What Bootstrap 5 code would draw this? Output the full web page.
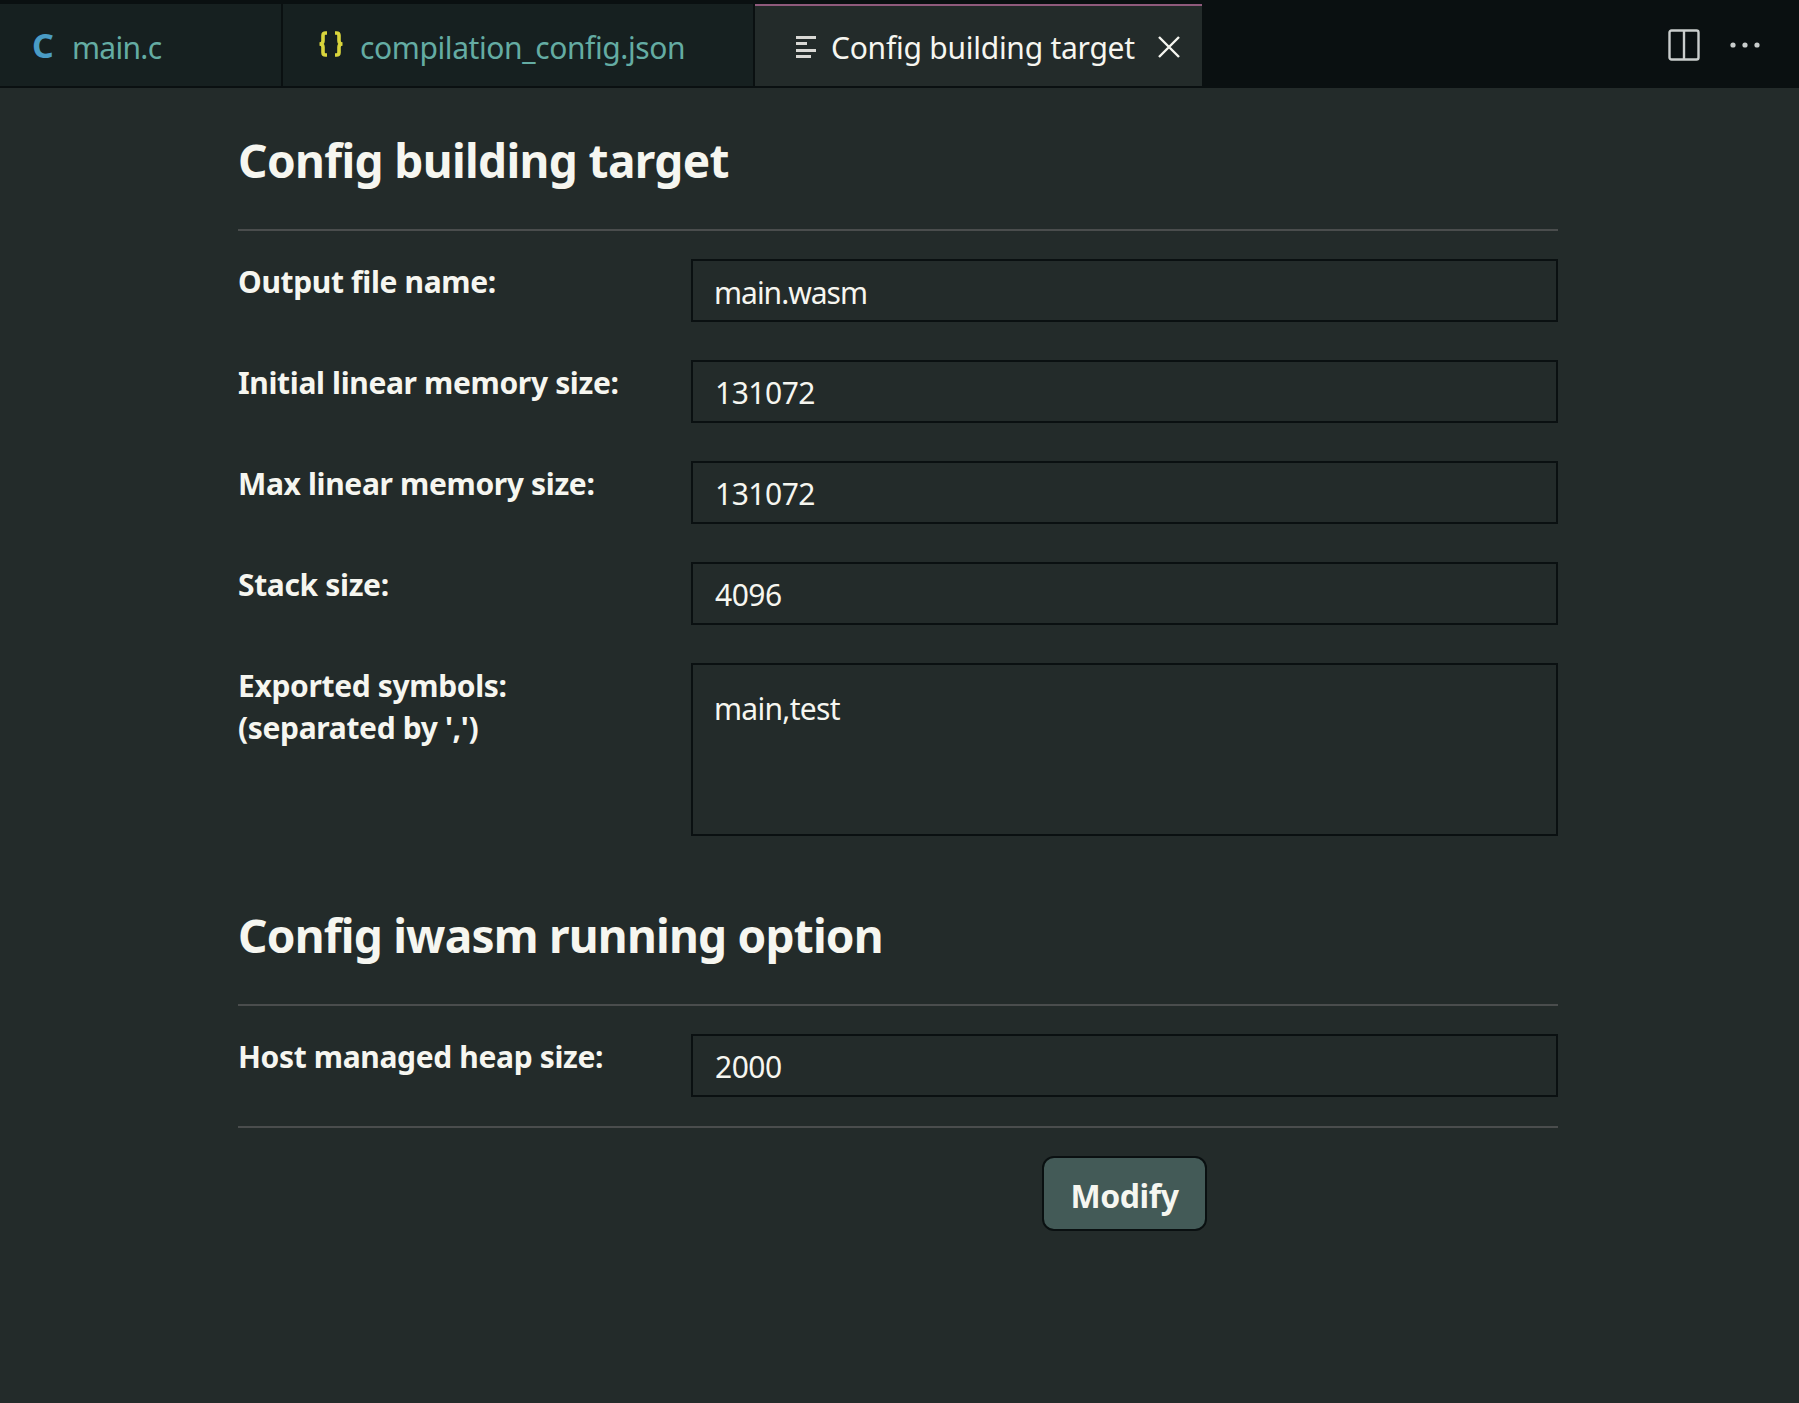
<!DOCTYPE html>
<html lang="en">
<head>
<meta charset="utf-8">
<title>Config building target</title>
<link rel="stylesheet" href="https://cdn.jsdelivr.net/npm/bootstrap@5.3.0/dist/css/bootstrap.min.css">
<style>
html,body{height:100%}
body{background:#232b2a;color:#f6f6f0;font-family:"Noto Sans","Open Sans",sans-serif;overflow:hidden}
.tabbar{height:88px;background:#0a1011;padding-top:4px;border-bottom:2px solid #0a1011}
.tabitem{height:82px;background:#162020;color:#64aca3;font-size:30px;letter-spacing:-.7px;border-right:2px solid #0a1011;flex:none;padding-top:4px}
.tabitem.one{width:283px;padding-left:32px}
.tabitem.two{width:472px;padding-left:35px;letter-spacing:-.4px}
.tabitem.three{width:447px;padding-left:40px;padding-top:2px;background:#232b2a;color:#f6f6f0;border-right:0;border-top:2px solid #8f5a7c;height:82px;letter-spacing:-.25px}
.cglyph{color:#4a9cc5;font-weight:700;font-size:34px;width:40px;line-height:1;margin-top:-4px}
.braceic{margin-right:16px;margin-top:-6px;flex:none}
.tabname{margin-left:-2px}
.formwrap{width:1320px;margin-left:238px}
.headline{font-size:46px;font-weight:700;line-height:60px;letter-spacing:-.65px;margin:0;padding-top:42px;height:141px}
.headline.second{padding-top:69px;height:168px;letter-spacing:-.8px}
.rule{border:0;border-top:2px solid #4a4d4d;opacity:1;margin:0}
.rule.gapped{margin-top:29px}
.rowline{display:flex;margin-top:38px;height:63px}
.rowline.first{margin-top:28px}
.rowline.tall{height:173px}
.lbl{width:453px;font-size:30px;font-weight:700;line-height:42px;letter-spacing:-.35px;margin:0;flex:none;padding-top:2px}
.fieldbox{flex:1;height:100%;background:#232b2a;border:2px solid #0a1011;border-radius:0;color:#f6f6f0;font-size:30px;letter-spacing:-.5px;padding:2px 22px 0;font-family:inherit;resize:none;display:block;width:100%}
.fieldbox:focus{background:#232b2a;color:#f6f6f0;border-color:#0a1011;box-shadow:none}
.fieldbox.wordy{letter-spacing:-1px;padding-left:21px;padding-top:4px}
textarea.fieldbox{padding-top:23px;padding-left:21px;line-height:42px;letter-spacing:-.7px}
.btnline{display:flex;margin-top:28px}
.btnspace{width:453px;flex:none}
.btncell{flex:1;display:flex;justify-content:center}
.modbtn{width:165px;height:75px;background:#435a57;color:#f6f6f0;border:2px solid #0a1011;border-radius:12px;font-size:32px;font-weight:700;letter-spacing:-.4px;padding:4px 0 0}
.modbtn:hover{background:#435a57;color:#f6f6f0;border-color:#0a1011}
.closeic{margin-right:22px}
.splitic{margin-right:30px}
.dotsic{margin-right:39px}
</style>
</head>
<body>
<nav class="tabbar d-flex align-items-start">
  <div class="tabitem one d-flex align-items-center"><span class="cglyph">C</span><span>main.c</span></div>
  <div class="tabitem two d-flex align-items-center">
    <svg class="braceic" width="26" height="26" viewBox="0 0 26 26"><path d="M9 2H7.5Q5 2 5 4.5V10Q5 13 1.5 13Q5 13 5 16V21.5Q5 24 7.5 24H9M17 2H18.500Q21 2 21 4.500V10Q21 13 24.500 13Q21 13 21 16V21.500Q21 24 18.500 24H17" fill="none" stroke="#d9d53c" stroke-width="3.6"/></svg>
    <span>compilation_config.json</span></div>
  <div class="tabitem three d-flex align-items-center">
    <svg width="22" height="22" viewBox="0 0 22 22" class="me-3"><g fill="#d8d8d4"><rect x="1" y="0" width="20" height="3"/><rect x="1" y="6" width="11" height="3"/><rect x="1" y="13" width="20" height="3"/><rect x="1" y="19" width="15" height="3"/></g></svg>
    <span class="tabname">Config building target</span>
    <svg width="22" height="22" viewBox="0 0 22 22" class="ms-auto closeic"><path d="M1 1 21 21M21 1 1 21" stroke="#f6f6f0" stroke-width="2.4" fill="none"/></svg>
  </div>
  <div class="ms-auto d-flex align-items-center" style="height:82px">
    <svg width="32" height="32" viewBox="0 0 32 32" class="splitic"><rect x="1.5" y="1.5" width="29" height="29" rx="2" fill="none" stroke="#c9cdcc" stroke-width="2.4"/><path d="M16 2V30" stroke="#c9cdcc" stroke-width="2.4"/></svg>
    <svg width="30" height="6" viewBox="0 0 30 6" class="dotsic"><g fill="#c9cdcc"><circle cx="3" cy="3" r="2.6"/><circle cx="15" cy="3" r="2.6"/><circle cx="27" cy="3" r="2.6"/></g></svg>
  </div>
</nav>
<main class="formwrap">
  <h1 class="headline">Config building target</h1>
  <hr class="rule">
  <div class="rowline first"><label class="lbl" for="f1">Output file name:</label><input id="f1" class="fieldbox wordy form-control" value="main.wasm"></div>
  <div class="rowline"><label class="lbl" for="f2">Initial linear memory size:</label><input id="f2" class="fieldbox form-control" value="131072"></div>
  <div class="rowline"><label class="lbl" for="f3">Max linear memory size:</label><input id="f3" class="fieldbox form-control" value="131072"></div>
  <div class="rowline"><label class="lbl" for="f4">Stack size:</label><input id="f4" class="fieldbox form-control" value="4096"></div>
  <div class="rowline tall"><label class="lbl" for="f5">Exported symbols:<br>(separated by ',')</label><textarea id="f5" class="fieldbox form-control">main,test</textarea></div>
  <h2 class="headline second">Config iwasm running option</h2>
  <hr class="rule">
  <div class="rowline first"><label class="lbl" for="f6">Host managed heap size:</label><input id="f6" class="fieldbox form-control" value="2000"></div>
  <hr class="rule gapped">
  <div class="btnline"><div class="btnspace"></div><div class="btncell"><button class="btn modbtn" type="button">Modify</button></div></div>
</main>
<script src="https://cdn.jsdelivr.net/npm/bootstrap@5.3.0/dist/js/bootstrap.bundle.min.js"></script>
</body>
</html>
